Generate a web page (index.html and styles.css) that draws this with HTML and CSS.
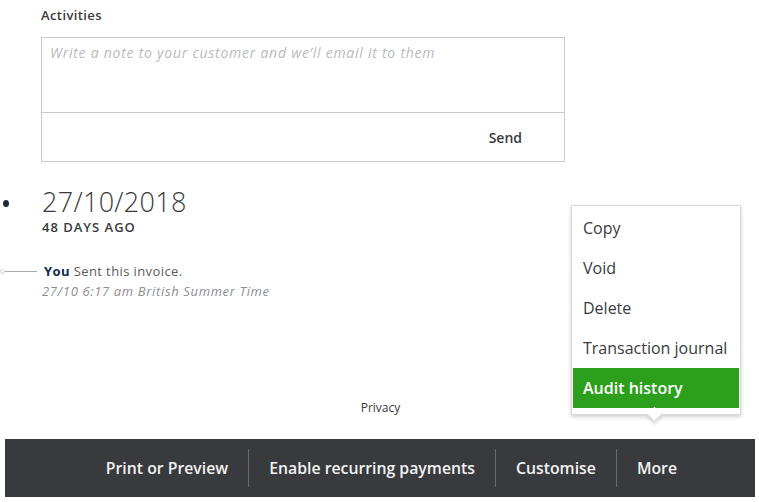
FILE: index.html
```html
<!DOCTYPE html>
<html lang="en">
<head>
<meta charset="utf-8">
<title>Invoice activities</title>
<link rel="stylesheet" href="styles.css">
</head>
<body>
<div class="page">
  <main class="content">
    <h2 class="section-title">Activities</h2>
    <div class="note-box">
      <div class="note-input">Write a note to your customer and we’ll email it to them</div>
      <div class="note-footer"><button class="send-btn">Send</button></div>
    </div>

    <div class="date-row">
      <div class="gutter"><span class="dot"></span></div>
      <div class="date-block">
        <div class="date">27/10/2018</div>
        <div class="ago">48 DAYS AGO</div>
      </div>
    </div>

    <div class="event-row">
      <div class="gutter connector"><span class="ring"></span><span class="line"></span></div>
      <div class="event">
        <div class="event-main"><strong class="who">You</strong> Sent this invoice.</div>
        <div class="event-time">27/10 6:17 am British Summer Time</div>
      </div>
    </div>

    <div class="privacy">Privacy</div>
  </main>

  <footer class="action-bar">
    <a class="action">Print or Preview</a>
    <a class="action">Enable recurring payments</a>
    <a class="action">Customise</a>
    <a class="action">More</a>
  </footer>

  <div class="menu">
    <div class="menu-item">Copy</div>
    <div class="menu-item">Void</div>
    <div class="menu-item">Delete</div>
    <div class="menu-item">Transaction journal</div>
    <div class="menu-item active">Audit history</div>
    <span class="menu-arrow"></span>
  </div>
</div>
</body>
</html>
```

FILE: styles.css
```css
* { box-sizing: border-box; }

html, body {
  margin: 0;
  padding: 0;
  background: #fff;
}

body {
  font-family: "Open Sans", "Lato", sans-serif;
  color: #393a3d;
  width: 759px;
  height: 502px;
  overflow: hidden;
}

.page {
  position: relative;
  width: 759px;
  height: 502px;
}

.content {
  display: flex;
  flex-direction: column;
  padding-top: 7px;
}

.section-title {
  margin: 0 0 0 41px;
  font-size: 13px;
  line-height: 16px;
  font-weight: 600;
  letter-spacing: 0.4px;
  color: #393a3d;
}

.note-box {
  margin: 14px 0 0 41px;
  width: 524px;
  border: 1px solid #c9cacd;
  display: flex;
  flex-direction: column;
}

.note-input {
  height: 75px;
  padding: 6px 0 0 8px;
  font-size: 14px;
  line-height: 18px;
  font-style: italic;
  letter-spacing: 0.75px;
  color: #b9babd;
  border-bottom: 1px solid #c9cacd;
}

.note-footer {
  height: 48px;
  display: flex;
  align-items: center;
  justify-content: flex-end;
  padding-right: 42px;
}

.send-btn {
  border: 0;
  background: none;
  padding: 0;
  font-family: inherit;
  font-size: 14px;
  font-weight: 600;
  color: #393a3d;
}

.date-row {
  display: flex;
  margin-top: 26px;
}

.gutter {
  width: 42px;
  flex: none;
  position: relative;
}

.dot {
  position: absolute;
  left: 3px;
  top: 12px;
  width: 6px;
  height: 7px;
  border-radius: 50%;
  background: #1b2a3a;
}

.date {
  font-size: 27px;
  line-height: 28px;
  font-weight: 300;
  color: #393a3d;
  letter-spacing: 0.3px;
}

.ago {
  margin-top: 4px;
  font-size: 13px;
  line-height: 14px;
  font-weight: 600;
  letter-spacing: 1px;
  color: #393a3d;
}

.event-row {
  display: flex;
  margin-top: 27px;
}

.connector {
  display: flex;
  align-items: flex-start;
  padding-top: 10px;
}

.ring {
  width: 5px;
  height: 5px;
  margin-top: -2px;
  border: 1px solid #d0d1d4;
  border-radius: 50%;
  flex: none;
}

.line {
  width: 32px;
  height: 1px;
  background: #a8a9ad;
}

.event {
  font-size: 13px;
  line-height: 20px;
  padding-left: 2px;
}

.who {
  font-weight: 700;
  color: #0d2b4e;
}

.event-main {
  color: #5a5b5e;
  letter-spacing: 0.4px;
}

.event-time {
  font-style: italic;
  color: #8d8e92;
  letter-spacing: 0.65px;
  margin-left: -2px;
}

.privacy {
  margin-top: 99px;
  text-align: center;
  font-size: 12px;
  line-height: 16px;
  color: #393a3d;
  padding-left: 2px;
}

.action-bar {
  position: absolute;
  left: 5px;
  top: 439px;
  width: 750px;
  height: 58px;
  background: #393a3d;
  display: flex;
  justify-content: flex-end;
  align-items: center;
  padding-right: 58px;
}

.action {
  height: 38px;
  display: flex;
  align-items: center;
  padding: 0 20px;
  font-size: 15.8px;
  font-weight: 600;
  color: #f2f2f3;
  border-left: 1px solid #6b6c70;
  cursor: pointer;
}

.action:first-child { border-left: 0; }

.menu {
  position: absolute;
  left: 571px;
  top: 205px;
  width: 170px;
  padding: 2px 1px 6px;
  background: #fff;
  border: 1px solid #d6d7da;
  box-shadow: 0 2px 4px rgba(0, 0, 0, 0.18);
}

.menu-item {
  height: 40px;
  display: flex;
  align-items: center;
  padding-left: 10px;
  font-size: 16px;
  color: #393a3d;
  white-space: nowrap;
}

.menu-item.active {
  height: 40px;
  background: #2ca01c;
  color: #fff;
  font-weight: 600;
}

.menu-arrow {
  position: absolute;
  left: 77px;
  bottom: -6px;
  width: 11px;
  height: 11px;
  background: #fff;
  border-right: 1px solid #d6d7da;
  border-bottom: 1px solid #d6d7da;
  transform: rotate(45deg);
  box-shadow: 2px 2px 3px rgba(0, 0, 0, 0.12);
}
```
